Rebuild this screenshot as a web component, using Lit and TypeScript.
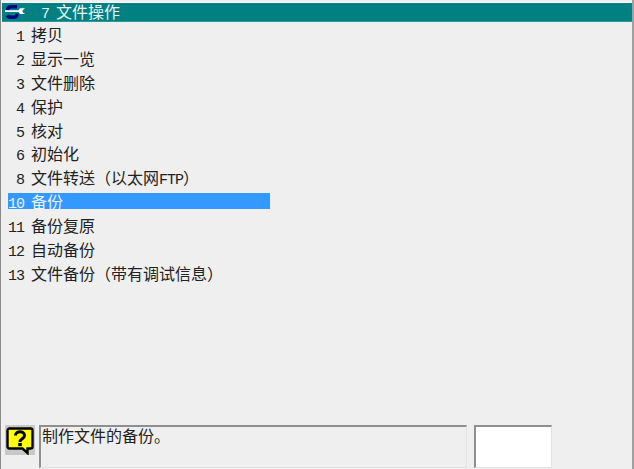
import { LitElement, html, css } from "lit";
import { customElement } from "lit/decorators.js";

const items: [string, any, boolean?][] = [
  ["1", "拷贝"],
  ["2", "显示一览"],
  ["3", "文件删除"],
  ["4", "保护"],
  ["5", "核对"],
  ["6", "初始化"],
  ["8", html`文件转送（以太网<span class="lat">FTP</span>）`],
  ["10", "备份", true],
  ["11", "备份复原"],
  ["12", "自动备份"],
  ["13", "文件备份（带有调试信息）"],
];

@customElement("app-root")
export class AppRoot extends LitElement {
  static styles = css`
    :host {
      display: flex;
      flex-direction: column;
      width: 634px;
      height: 469px;
      box-sizing: border-box;
      background: #efefef;
      color: #222;
      font-family: "Noto Sans CJK SC", sans-serif;
      font-size: 16px;
      line-height: 16px;
      border-left: 1px solid #8a8a8a;
      border-right: 2px solid #a0a0a0;
      padding-top: 2px;
      overflow: hidden;
    }
    .lat {
      font-family: "Liberation Mono", monospace;
      font-size: 15px;
      letter-spacing: -1px;
    }
    .title {
      display: flex;
      align-items: baseline;
      height: 18px;
      margin-left: 1px;
      background: #008080;
      color: #e8f4f4;
      border-top: 1px solid #fff;
      border-bottom: 1px solid #2a9a9a;
      line-height: 17px;
    }
    .title svg { align-self: center; margin-left: 3px; width: 21px; height: 14px; flex: none; }
    .title .no { width: 15px; margin-left: 15px; }
    .list { display: flex; flex-direction: column; margin-top: 4px; gap: 7.9px; }
    .row { display: flex; align-items: baseline; width: 262px; height: 16px; margin-left: 7px; }
    .row .no { width: 16px; text-align: right; }
    .row .txt { margin-left: 7px; }
    .row.sel { background: #3399ff; color: #e8f2ff; }
    .spacer { flex: 1; }
    .foot { display: flex; height: 43px; margin-bottom: 1px; }
    .help { margin: 0 0 0 4px; width: 30px; height: 30px; background: #c8c8c8; flex: none; }
    .msg {
      width: 428px;
      margin-left: 4px;
      box-sizing: border-box;
      border-top: 2px solid #8f8f8f;
      border-left: 2px solid #8f8f8f;
      border-right: 1px solid #e2e2e2;
      border-bottom: 1px solid #e2e2e2;
      padding: 0 0 0 1px;
    }
    .box {
      width: 78px;
      margin-left: 7px;
      box-sizing: border-box;
      background: #fff;
      border-top: 2px solid #8f8f8f;
      border-left: 2px solid #8f8f8f;
      border-right: 1px solid #e2e2e2;
      border-bottom: 1px solid #e2e2e2;
    }
  `;

  render() {
    return html`
      <div class="title">
        <svg viewBox="0 0 21 14">
          <path d="M12 1.800H6C3.500 1.800 2.500 3 2.500 5" fill="none" stroke="#000080" stroke-width="3.400" />
          <path d="M2 10.500C3 12 5 12.300 7 12.300H9.500C11 12.300 12 11 12 8.500" fill="none" stroke="#000080" stroke-width="3.400" />
          <path d="M0 5.200h13.500L15 3.200h5l-2.500 2.200v1.500L20 9h-5l-1.500-2H0z" fill="#fff" />
        </svg>
        <span class="no lat">7</span>
        <span>文件操作</span>
      </div>
      <div class="list">
        ${items.map(
          ([n, t, sel]) => html`<div class="row ${sel ? "sel" : ""}">
            <span class="no lat">${n}</span><span class="txt">${t}</span>
          </div>`
        )}
      </div>
      <div class="spacer"></div>
      <div class="foot">
        <svg class="help" viewBox="0 0 30 30">
          <path d="M4.500 3.500h21a2 2 0 0 1 2 2v16a2 2 0 0 1-2 2h-3v4.500l-5-4.500H4.500a2 2 0 0 1-2-2v-16a2 2 0 0 1 2-2z" fill="#ffff00" stroke="#000" stroke-width="2.400" />
          <path d="M10.500 10.500c0-5 9-5 9 0 0 3.500-4.500 3-4.500 6.500" fill="none" stroke="#000" stroke-width="3" />
          <rect x="13.200" y="18" width="3.600" height="3.200" fill="#000" />
        </svg>
        <div class="msg">制作文件的备份。</div>
        <div class="box"></div>
      </div>
    `;
  }
}
